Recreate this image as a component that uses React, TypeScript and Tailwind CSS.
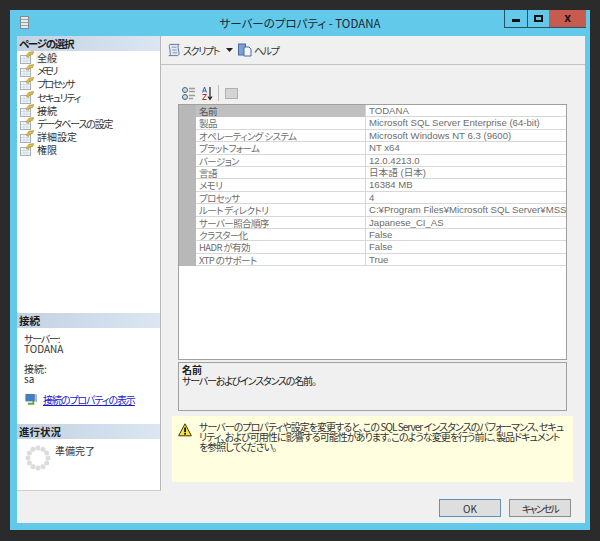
import React from 'react'

const jp = "font-['Noto_Sans_CJK_JP','Liberation_Sans',sans-serif] [font-feature-settings:'palt']"

// kana runs narrower than kanji in the original UI font, so each label has its own tracking
const pages = [
  { label: '全般', cls: '' },
  { label: 'メモリ', cls: 'tracking-[-2.500px]' },
  { label: 'プロセッサ', cls: 'tracking-[-1.800px]' },
  { label: 'セキュリティ', cls: 'tracking-[-1.500px]' },
  { label: '接続', cls: '' },
  { label: 'データベースの設定', cls: 'tracking-[-1.200px]' },
  { label: '詳細設定', cls: '' },
  { label: '権限', cls: '' },
]

const rows = [
  ['名前', 'TODANA'],
  ['製品', 'Microsoft SQL Server Enterprise (64-bit)'],
  ['オペレーティング システム', 'Microsoft Windows NT 6.3 (9600)'],
  ['プラットフォーム', 'NT x64'],
  ['バージョン', '12.0.4213.0'],
  ['言語', '日本語 (日本)'],
  ['メモリ', '16384 MB'],
  ['プロセッサ', '4'],
  ['ルート ディレクトリ', 'C:¥Program Files¥Microsoft SQL Server¥MSSQL12.MSSQLSERVER'],
  ['サーバー照合順序', 'Japanese_CI_AS'],
  ['クラスター化', 'False'],
  ['HADR が有効', 'False'],
  ['XTP のサポート', 'True'],
]

const PageIcon = () => (
  <svg width="14" height="13" viewBox="0 0 14 13" className="shrink-0">
    <rect x="0.500" y="4.500" width="10" height="8" fill="#f6f8fa" stroke="#a3b1bf" />
    <path d="M1 7.500h9M1 10h9M4 5v7M7 5v7" stroke="#c6d0da" strokeWidth="0.700" />
    <path d="M6 5 L9 1.200 L13.800 0.600 L12.500 3.500 L9.500 4 L8.500 6.500Z" fill="#e0bb4a" stroke="#a3852b" strokeWidth="0.600" />
  </svg>
)

const SectionHeader = ({ children }: { children: React.ReactNode }) => (
  <div className="h-[15px] shrink-0 pl-[2px] bg-gradient-to-r from-[#c3d2e1] to-[#dbe6f1] text-[10.5px] leading-[15px] font-bold text-[#1c1c1c]">
    {children}
  </div>
)

const Spinner = () => (
  <svg width="26" height="26" viewBox="0 0 26 26">
    {Array.from({ length: 12 }).map((_, i) => {
      const a = (i * Math.PI) / 6
      return <circle key={i} cx={13 + 10 * Math.cos(a)} cy={13 + 10 * Math.sin(a)} r="2.500" fill="#dcdcdc" />
    })}
  </svg>
)

export default function App() {
  return (
    <div className={`w-[600px] h-[541px] bg-[#2b2b2b] p-[10px] overflow-hidden ${jp}`}>
      <div className="w-[580px] h-[520px] bg-[#62c9ea] flex flex-col pl-[7px] pr-[5px] pb-[7px]">
        {/* title bar */}
        <div className="h-[26px] shrink-0 flex items-start relative">
          <svg width="10" height="14" viewBox="0 0 10 14" className="mt-[6px] ml-[3px]">
            <rect x="0.500" y="0.500" width="8" height="12" fill="#e8e8e8" stroke="#7d8c94" />
            <path d="M1 3.500h7M1 6.500h7M1 9.500h7" stroke="#9aa6ac" />
          </svg>
          <div className="absolute -left-[7px] -right-[5px] top-[5px] text-center text-[11.500px] leading-[17px] text-[#1a2a33]">
            サーバーのプロパティ - TODANA
          </div>
          <div className="absolute -right-[1px] top-0 flex h-[18px] border-b border-[#2b4f63]">
            <div className="w-[23px] flex items-center justify-center border-l border-[#2b4f63]">
              <div className="w-[8px] h-[3px] bg-[#111] mt-[3px]" />
            </div>
            <div className="w-[22px] flex items-center justify-center border-l border-[#2b4f63]">
              <div className="w-[9px] h-[7px] border-2 border-[#111] -mt-[1px]" />
            </div>
            <div className="w-[37px] flex items-center justify-center bg-[#c75b4f] text-[#1a1111] text-[12px] font-bold leading-none pb-[3px]">
              x
            </div>
          </div>
        </div>

        {/* client */}
        <div className="flex-1 flex flex-col bg-[#f0f0f0] min-h-0">
          <div className="flex-1 flex min-h-0">
            {/* left pane */}
            <div className="w-[144px] shrink-0 flex flex-col bg-white border-r border-[#b8b8b8] border-b border-b-[#cfcfcf]">
              <SectionHeader><span className="tracking-[-1.300px]">ページの選択</span></SectionHeader>
              <div className="h-[262px] shrink-0 pl-[3px]">
                {pages.map((p, i) => (
                  <div key={p.label} className="h-[13.200px] flex items-center gap-[2px] text-[10px] leading-[13px] text-[#333]">
                    <PageIcon />
                    <span className={`${p.cls} px-[1px] ${i === 0 ? 'bg-[#f2f2f2]' : ''}`}>{p.label}</span>
                  </div>
                ))}
              </div>
              <SectionHeader>接続</SectionHeader>
              <div className="h-[96px] shrink-0 pl-[7px] pt-[6px] text-[10px] leading-[10px] text-[#333]">
                <div className="tracking-[-1.200px]">サーバー:</div>
                <div>TODANA</div>
                <div className="mt-[10px]">接続:</div>
                <div>sa</div>
                <div className="flex items-center gap-[5px] mt-[9px] ml-[1px]">
                  <svg width="13" height="14" viewBox="0 0 14 14" className="shrink-0">
                    <rect x="1" y="1" width="9" height="7" fill="#3d7fd0" stroke="#55708e" />
                    <rect x="11" y="1" width="2" height="8" fill="#9fb4c8" />
                    <path d="M3 11h7M9 8v3" stroke="#5eaa3c" strokeWidth="2" fill="none" />
                  </svg>
                  <span className="text-[#1a1acc] underline whitespace-nowrap tracking-[-1.100px]">接続のプロパティの表示</span>
                </div>
              </div>
              <SectionHeader>進行状況</SectionHeader>
              <div className="flex-1 flex pl-[8px] pt-[6px] gap-[4px]">
                <Spinner />
                <span className="text-[10px] leading-[13px] text-[#333] -mt-[1px]">準備完了</span>
              </div>
            </div>

            {/* right pane */}
            <div className="flex-1 flex flex-col min-w-0">
              <div className="h-[29px] shrink-0 border-b border-[#c4c4c4] flex items-center pl-[6px] text-[10px] text-[#333]">
                <svg width="14" height="14" viewBox="0 0 15 14" className="shrink-0">
                  <path d="M3 1h10c-1 1-1.500 2-1 4l1 6c0 1-1 2-2 2H2c1 0 2-1 1.500-2L3 6C2.500 4 2 2.500 3 1Z" fill="#e4e9f2" stroke="#59739b" />
                  <path d="M5 4h5M5.500 7h5M6 10h5" stroke="#7f93b3" />
                </svg>
                <span className="ml-[2px] w-[43px] whitespace-nowrap tracking-[-1.400px]">スクリプト</span>
                <svg width="7" height="4" viewBox="0 0 7 4" className="shrink-0">
                  <path d="M0 0h7L3.500 4Z" fill="#222" />
                </svg>
                <svg width="14" height="14" viewBox="0 0 14 14" className="ml-[5px] shrink-0">
                  <rect x="0.500" y="1" width="7" height="11" fill="#7ba1d6" stroke="#4a6a9f" />
                  <path d="M6 4h5l2 2v7H6Z" fill="#f3f5f9" stroke="#4a6a9f" />
                </svg>
                <span className="ml-[2px] tracking-[-1.500px]">ヘルプ</span>
              </div>

              <div className="shrink-0 flex flex-col pl-[17px] pr-[18px]">
                {/* property grid toolbar */}
                <div className="h-[39px] shrink-0 flex items-end pb-[3px] pl-[4px] gap-[5px]">
                  <svg width="14" height="15" viewBox="0 0 14 15">
                    <circle cx="3" cy="4" r="2.500" fill="#cfd8e0" stroke="#3c6a7c" />
                    <circle cx="3" cy="11" r="2.500" fill="#cfd8e0" stroke="#3c6a7c" />
                    <path d="M7 2.500h6M7 5.500h6" stroke="#9c9c9c" strokeWidth="1.500" />
                    <path d="M7 9.500h6M7 12.500h4" stroke="#9c9c9c" strokeWidth="1.500" />
                  </svg>
                  <svg width="13" height="15" viewBox="0 0 11 15">
                    <path d="M0.500 6.500 L2.500 1 L4.500 6.500M1.200 5h2.600" stroke="#2f62b5" fill="none" />
                    <path d="M0.500 8.500h4L0.500 13.500h4" stroke="#b5312f" fill="none" />
                    <path d="M8 1v12M6 10.500l2 3 2-3" stroke="#222" fill="none" strokeWidth="1.200" />
                  </svg>
                  <div className="w-px h-[16px] bg-[#bdbdbd] -ml-[1px]" />
                  <div className="w-[13px] h-[11px] bg-[#d4d4d4] border border-[#b0b0b0] ml-[1px] mb-[2px]" />
                </div>

                {/* property grid */}
                <div className="h-[256px] shrink-0 bg-white border border-[#a0a0a0] text-[9.500px] leading-[12.400px] text-[#6d6d6d]">
                  {rows.map(([name, value], i) => (
                    <div key={name} className="flex h-[12.400px] whitespace-nowrap overflow-hidden">
                      <div className="w-[17px] shrink-0 bg-[#b8b8b8]" />
                      <div className={`w-[170px] shrink-0 pl-[3px] tracking-[-0.600px] border-r border-[#d4d4d4] ${i === 0 ? 'bg-[#c0c0c0] text-[#555]' : 'border-b border-[#d8d8d8]'}`}>
                        {name}
                      </div>
                      <div className="flex-1 pl-[3px] border-b border-[#d8d8d8] overflow-hidden text-[9.600px] font-['Liberation_Sans','Noto_Sans_CJK_JP',sans-serif]">
                        {value}
                      </div>
                    </div>
                  ))}
                </div>

                {/* description */}
                <div className="h-[49px] shrink-0 mt-[2px] border border-[#a0a0a0] bg-[#f0f0f0] pl-[3px] pt-[1px] text-[10px] leading-[11px] text-[#222]">
                  <div className="font-bold">名前</div>
                  <div className="tracking-[-1.200px]">サーバーおよびインスタンスの名前。</div>
                </div>
              </div>

              {/* warning */}
              <div className="h-[66px] shrink-0 ml-[11px] mr-[12px] mt-[5px] bg-[#ffffe0] flex pl-[6px] pt-[7px] gap-[7px]">
                <svg width="14" height="14" viewBox="0 0 14 14" className="shrink-0">
                  <path d="M7 0.800 L13.400 12.800 H0.600Z" fill="#f7e23a" stroke="#3a3a1a" />
                  <rect x="6.200" y="4.500" width="1.800" height="4.500" fill="#111" />
                  <rect x="6.200" y="9.800" width="1.800" height="1.800" fill="#111" />
                </svg>
                <p className="text-[10px] leading-[10px] tracking-[-0.950px] text-[#333] whitespace-nowrap -mt-[1px]">
                  サーバーのプロパティや設定を変更すると、この SQL Server インスタンスのパフォーマンス、セキュ<br />
                  リティ、および可用性に影響する可能性があります。このような変更を行う前に、製品ドキュメント<br />
                  を参照してください。
                </p>
              </div>
              <div className="flex-1" />
            </div>
          </div>

          {/* footer */}
          <div className="h-[32px] shrink-0 flex items-start justify-end gap-[8px] pt-[8px] pr-[14px] text-[10px] text-[#333]">
            <div className="w-[62px] h-[18px] flex items-center justify-center bg-[#dedede] border border-[#5f93bd]">OK</div>
            <div className="w-[62px] h-[18px] flex items-center justify-center bg-[#dedede] border border-[#8c8c8c] tracking-[-1.800px]">キャンセル</div>
          </div>
        </div>
      </div>
    </div>
  )
}
